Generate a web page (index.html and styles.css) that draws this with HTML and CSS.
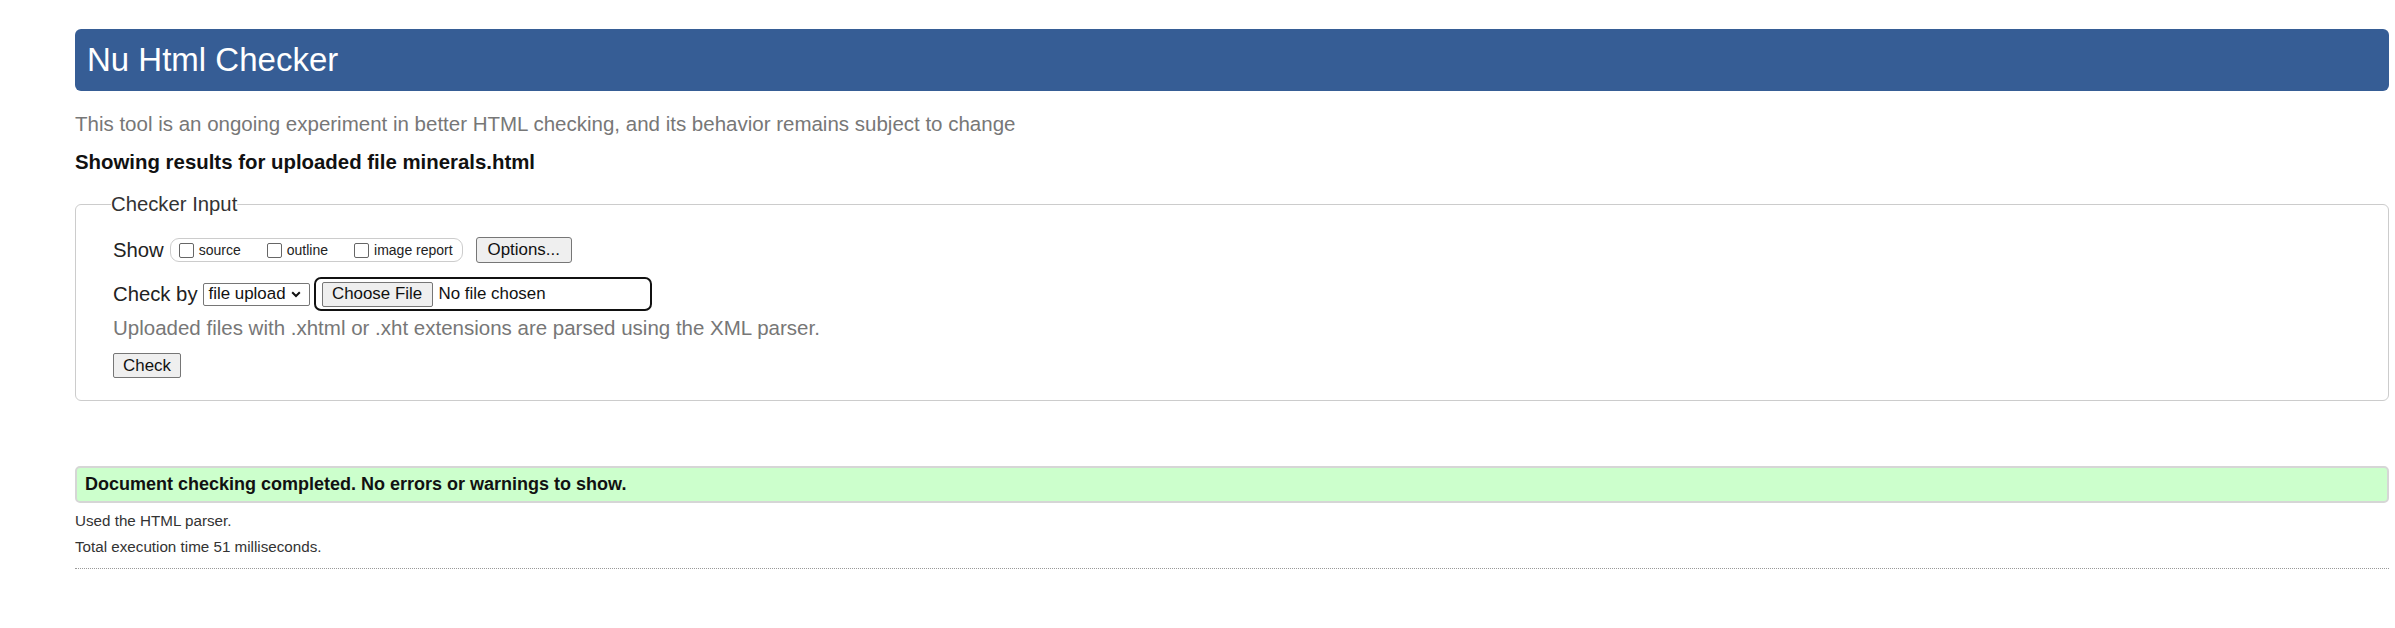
FILE: index.html
```html
<!DOCTYPE html>
<html lang="en">
<head>
<meta charset="utf-8">
<title>Nu Html Checker</title>
<link rel="stylesheet" href="styles.css">
</head>
<body>
<div class="page">
  <h1 class="header">Nu Html Checker</h1>
  <p class="intro">This tool is an ongoing experiment in better HTML checking, and its behavior remains subject to change</p>
  <p class="showing">Showing results for uploaded file minerals.html</p>
  <fieldset class="checker">
    <legend class="legend">Checker Input</legend>
    <div class="row row-show">
      <span class="label">Show</span>
      <span class="group">
        <label class="opt"><span class="box"></span>source</label>
        <label class="opt"><span class="box"></span>outline</label>
        <label class="opt"><span class="box"></span>image report</label>
      </span>
      <span class="btn btn-options">Options...</span>
    </div>
    <div class="row row-by">
      <span class="label">Check by</span>
      <span class="select">file upload<svg class="chev" width="10" height="7" viewBox="0 0 10 7"><path d="M1.2 1.3 L5 5 L8.8 1.3" fill="none" stroke="#111" stroke-width="2"/></svg></span>
      <span class="file">
        <span class="btn btn-choose">Choose File</span>
        <span class="nofile">No file chosen</span>
      </span>
    </div>
    <p class="hint">Uploaded files with .xhtml or .xht extensions are parsed using the XML parser.</p>
    <div class="row row-check">
      <span class="btn btn-check">Check</span>
    </div>
  </fieldset>
  <p class="success">Document checking completed. No errors or warnings to show.</p>
  <p class="small first">Used the HTML parser.</p>
  <p class="small">Total execution time 51 milliseconds.</p>
  <hr class="rule">
</div>
</body>
</html>
```

FILE: styles.css
```css
html, body {
  margin: 0;
  padding: 0;
  background: #ffffff;
}

body {
  font-family: "Liberation Sans", Arial, sans-serif;
  color: #222222;
}

.page {
  padding: 29px 6px 0 75px;
}

.header {
  margin: 0;
  height: 62px;
  line-height: 62px;
  padding-left: 12px;
  background: #365d95;
  color: #ffffff;
  font-size: 33px;
  font-weight: normal;
  border-radius: 6px;
}

.intro {
  margin: 21px 0 0;
  font-size: 20.5px;
  line-height: 24px;
  color: #777777;
}

.showing {
  margin: 14px 0 0;
  font-size: 20.4px;
  line-height: 24px;
  font-weight: bold;
  color: #111111;
}

.checker {
  margin: 18px 0 0;
  padding: 21px 10px 22px 37px;
  border: 1px solid #cccccc;
  border-radius: 6px;
  min-width: 0;
}

.legend {
  margin-left: -2px;
  padding: 0;
  font-size: 20.3px;
  line-height: 24px;
  color: #333333;
}

.row {
  display: flex;
  align-items: center;
}

.row-show {
  height: 26px;
}

.row-by {
  margin-top: 14px;
  height: 34px;
}

.row-check {
  margin-top: 13px;
  height: 25px;
}

.label {
  font-size: 20.3px;
  color: #222222;
}

.group {
  display: flex;
  align-items: center;
  margin-left: 6px;
  width: 293px;
  height: 24px;
  box-sizing: border-box;
  border: 1px solid #cccccc;
  border-radius: 9px;
  padding-left: 8px;
}

.opt {
  display: flex;
  align-items: center;
  font-size: 14px;
  color: #222222;
  margin-right: 26px;
}

.opt:last-child {
  margin-right: 0;
}

.box {
  width: 13px;
  height: 13px;
  border: 1px solid #666666;
  border-radius: 2px;
  background: #ffffff;
  margin-right: 5px;
}

.btn {
  display: inline-flex;
  align-items: center;
  justify-content: center;
  box-sizing: border-box;
  background: #efefef;
  border: 1px solid #767676;
  border-radius: 3px;
  font-size: 16.9px;
  color: #111111;
}

.btn-options {
  margin-left: 13px;
  width: 96px;
  height: 26px;
}

.select {
  display: inline-flex;
  align-items: center;
  box-sizing: border-box;
  margin-left: 5px;
  width: 107px;
  height: 23px;
  padding-left: 5px;
  border: 1px solid #767676;
  border-radius: 2px;
  font-size: 16.9px;
  color: #111111;
  background: #ffffff;
}

.chev {
  margin-left: 5px;
}

.file {
  display: inline-flex;
  align-items: center;
  box-sizing: border-box;
  margin-left: 4px;
  width: 338px;
  height: 34px;
  padding-left: 6px;
  border: 2px solid #111111;
  border-radius: 7px;
}

.btn-choose {
  width: 111px;
  height: 25px;
  border-radius: 2px;
}

.nofile {
  margin-left: 6px;
  font-size: 16.9px;
  color: #111111;
}

.hint {
  margin: 5px 0 0;
  font-size: 20.5px;
  line-height: 24px;
  color: #777777;
}

.btn-check {
  width: 68px;
  height: 25px;
  border-radius: 2px;
}

.success {
  margin: 65px 0 0;
  height: 37px;
  line-height: 33px;
  box-sizing: border-box;
  padding-left: 8px;
  background: #ccffcc;
  border: 2px solid #d6d6d6;
  border-radius: 5px;
  font-size: 18px;
  font-weight: bold;
  color: #111111;
}

.small {
  margin: 0;
  font-size: 15.2px;
  line-height: 26px;
  color: #333333;
}

.small.first {
  margin-top: 5px;
}

.rule {
  margin: 8px 0 0;
  height: 0;
  border: 0;
  border-top: 1px dotted #999999;
}
```
